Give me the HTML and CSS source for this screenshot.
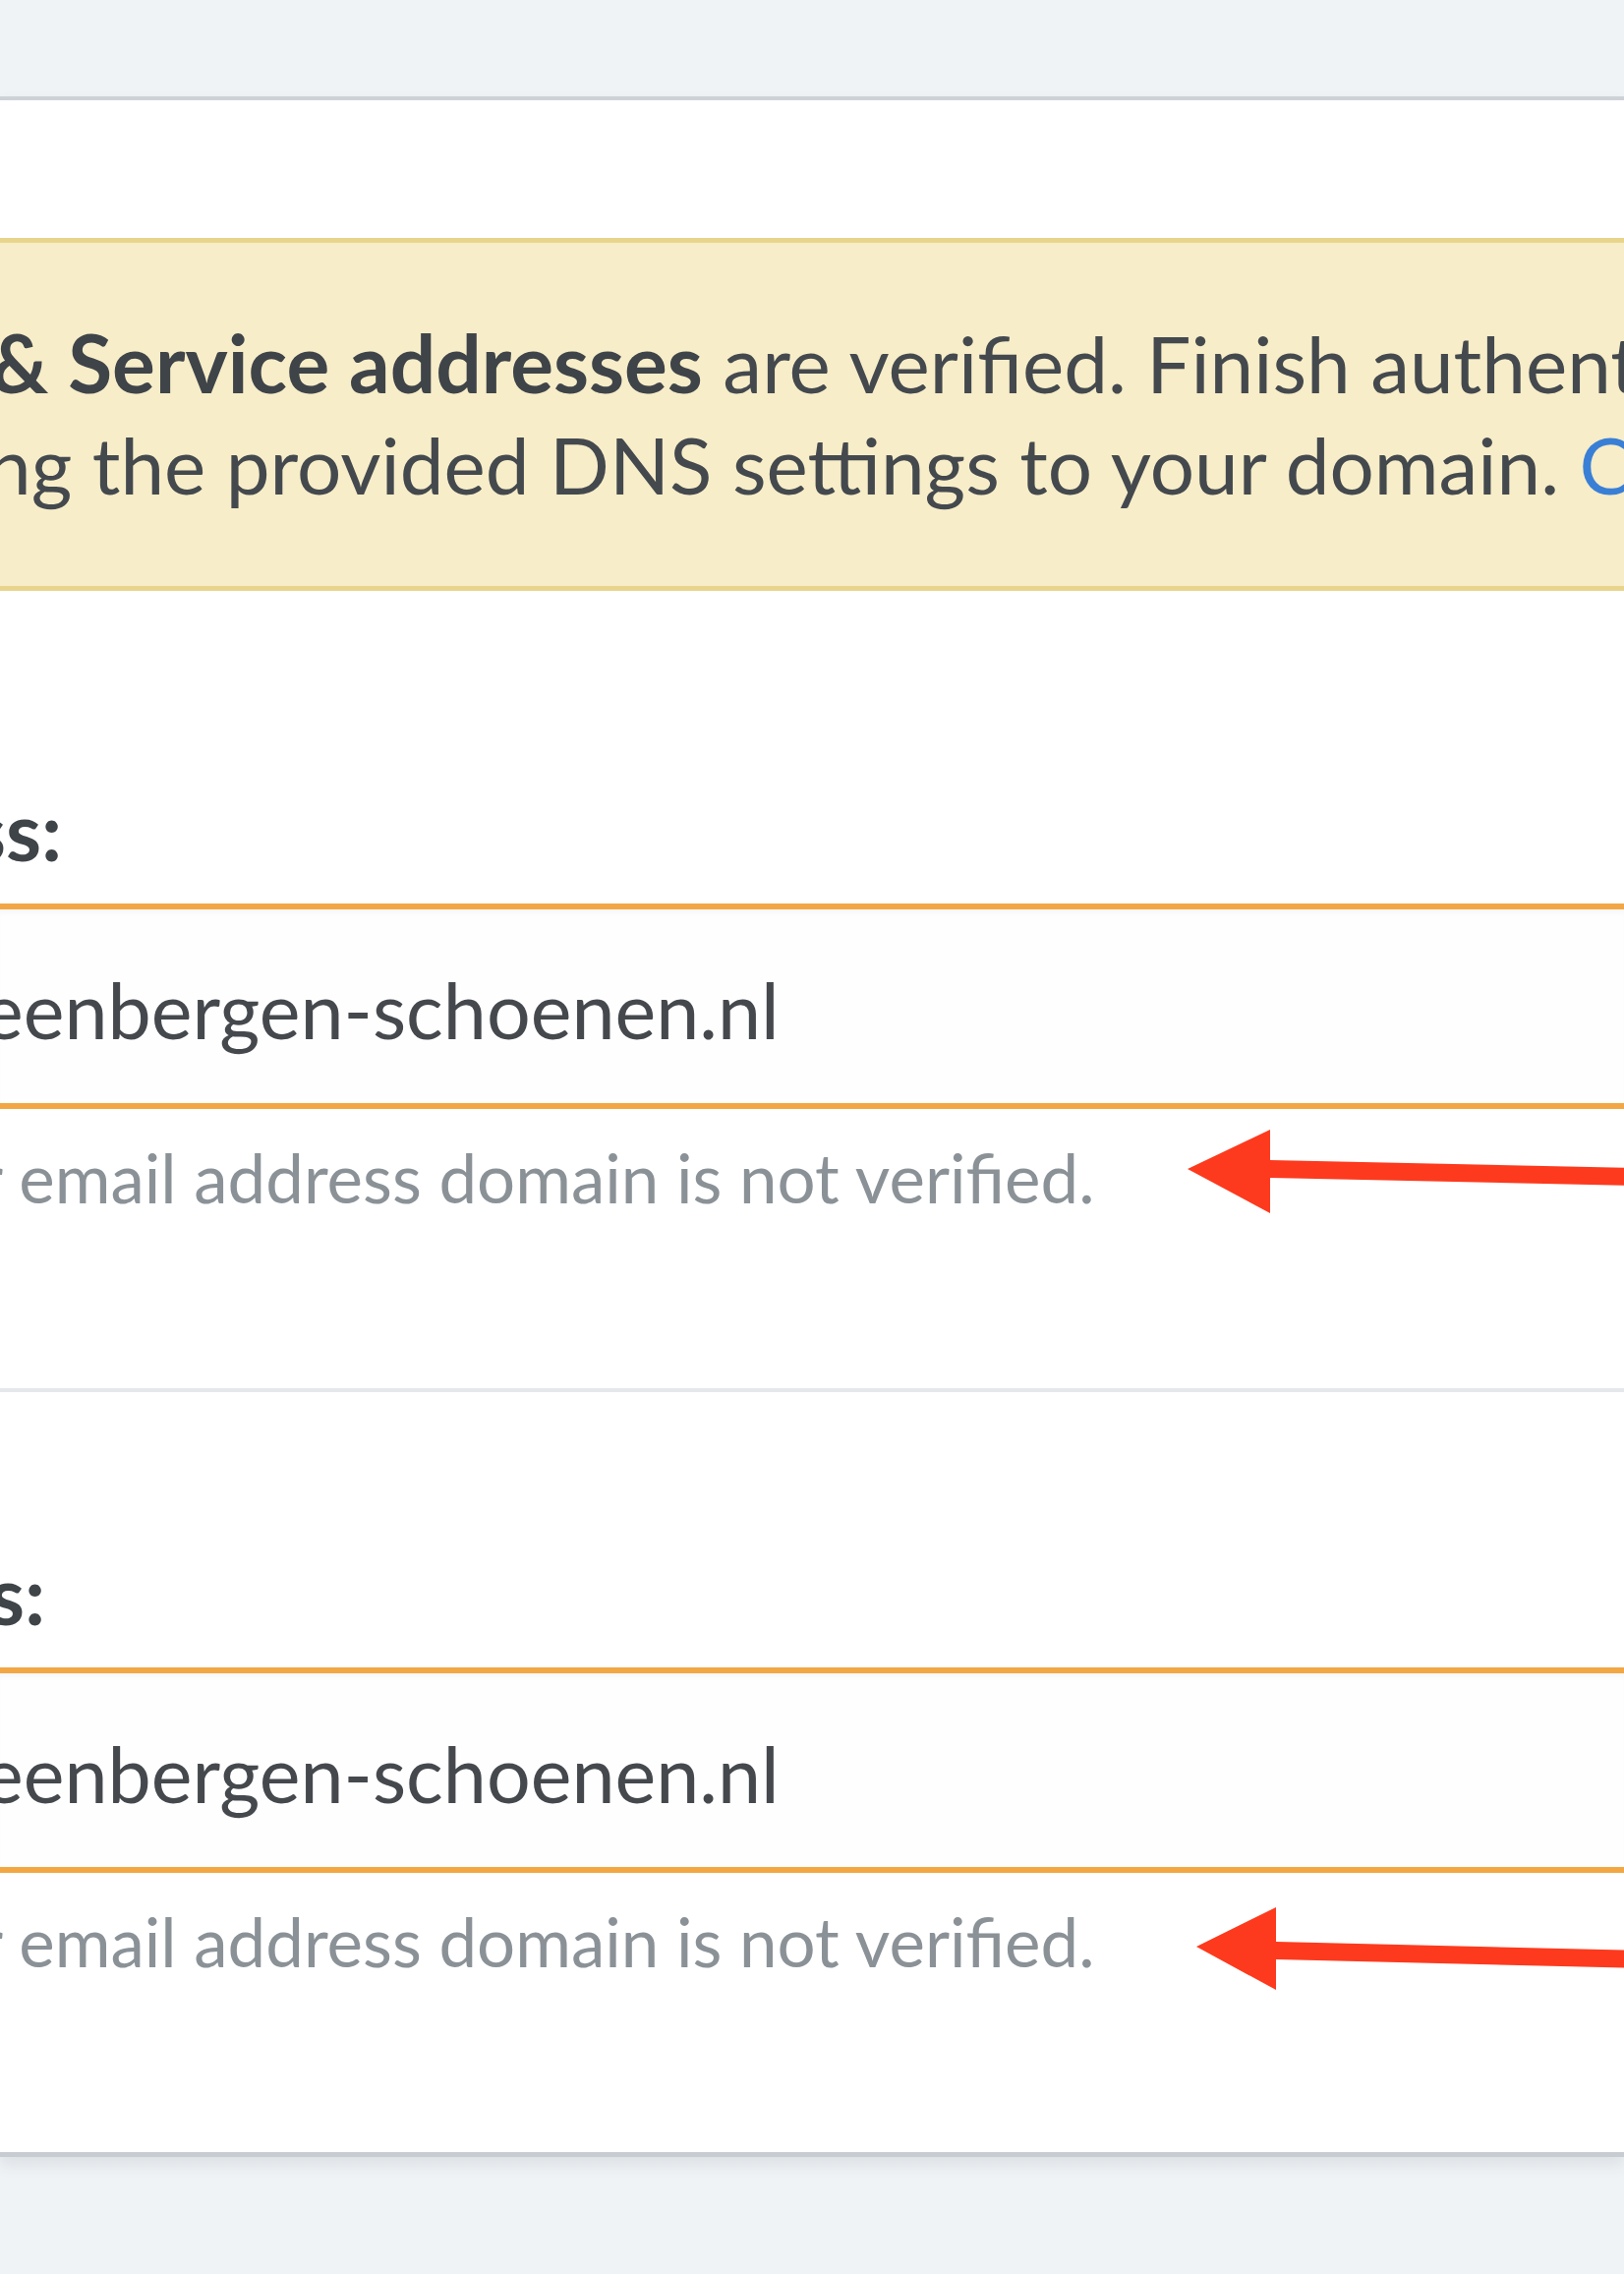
FILE: index.html
```html
<!DOCTYPE html>
<html lang="en">
<head>
<meta charset="utf-8">
<title>Email settings</title>
<link rel="stylesheet" href="styles.css">
</head>
<body>
<div class="page">
  <div class="card">
    <div class="notice">
      <div class="notice-line line-a"><strong>&amp; Service addresses</strong> are verified. Finish authentication by adding</div>
      <div class="notice-line line-b">ng the provided DNS settings to your domain. <a class="link" href="#">Click here</a></div>
    </div>

    <div class="field">
      <div class="label label-a">ss:</div>
      <div class="input"><span class="value">eenbergen-schoenen.nl</span></div>
      <div class="help">
        <span class="help-text">r email address domain is not verified.</span>
        <svg class="arrow arrow-a" width="460" height="100" viewBox="0 0 460 100">
          <polygon points="8,50 92,10 92,41 460,49 460,67 92,59 92,95" fill="#fd3a1e"/>
        </svg>
      </div>
    </div>

    <div class="field field-sep">
      <div class="label label-b">s:</div>
      <div class="input"><span class="value">eenbergen-schoenen.nl</span></div>
      <div class="help">
        <span class="help-text">r email address domain is not verified.</span>
        <svg class="arrow arrow-b" width="460" height="100" viewBox="0 0 460 100">
          <polygon points="8,50 89,10 89,45 460,54 460,72 89,63 89,94" fill="#fd3a1e"/>
        </svg>
      </div>
    </div>
  </div>
</div>
</body>
</html>
```

FILE: styles.css
```css
html, body {
  margin: 0;
  padding: 0;
  background: #eff3f6;
  overflow: hidden;
}

.page {
  width: 1652px;
  height: 2313px;
  padding-top: 98px;
  box-sizing: border-box;
  font-family: Lato, "Open Sans", sans-serif;
  font-size: 82px;
  line-height: 103px;
  color: #44494e;
}

.card {
  background: #ffffff;
  border-top: 4px solid #cdd2d7;
  border-bottom: 5px solid #c6ccd1;
  box-shadow: 0 8px 14px rgba(60, 70, 80, 0.10);
  padding-top: 140px;
  overflow: hidden;
}

.notice {
  background: #f7edc8;
  border-top: 5px solid #e8d58c;
  border-bottom: 5px solid #e8d58c;
  padding: 70px 0 72px;
  margin-bottom: 38px;
  font-size: 80px;
  white-space: nowrap;
  overflow: hidden;
}

.notice-line strong {
  font-size: 82px;
  font-weight: 700;
  color: #3f4449;
}

.line-a { margin-left: -10px; }
.line-b { margin-left: -13px; }

.link {
  color: #3a7fd6;
  text-decoration: none;
}

.field {
  padding: 154px 0 163px;
}

.field-sep {
  border-top: 4px solid #e4e8eb;
}

.label {
  font-weight: 700;
  color: #3f4449;
  margin-bottom: 23px;
  white-space: nowrap;
}

.label-a { margin-left: -30px; }
.label-b { margin-left: -11px; }

.input {
  border-top: 6px solid #f2a744;
  border-bottom: 6px solid #f2a744;
  background: #fefefe;
  box-shadow: inset 0 6px 6px -4px rgba(40, 60, 80, 0.05);
  padding: 50px 0 44px;
  font-size: 79px;
  white-space: nowrap;
  overflow: hidden;
}

.value {
  display: inline-block;
  margin-left: -18px;
  color: #45494d;
}

.help {
  position: relative;
  margin-top: 18px;
  font-size: 69px;
  white-space: nowrap;
  color: #8b9297;
}

.help-text {
  display: inline-block;
  margin-left: -22px;
}

.arrow {
  position: absolute;
}

.arrow-a { left: 1200px; top: -7px; }
.arrow-b { left: 1209px; top: 7px; }
```
